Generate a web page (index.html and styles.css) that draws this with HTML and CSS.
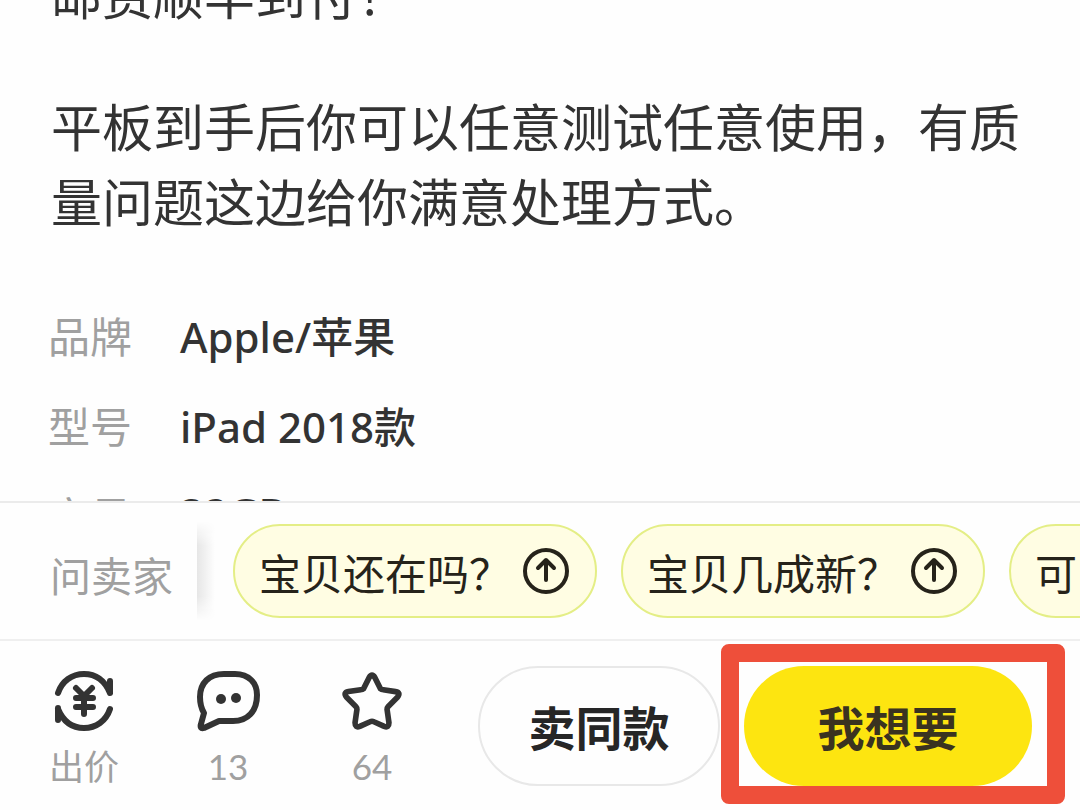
FILE: index.html
```html
<!DOCTYPE html>
<html lang="zh-CN">
<head>
    <meta charset="UTF-8">
    <meta name="viewport" content="width=device-width, initial-scale=1.0">
    <title>宝贝详情</title>
    <link rel="stylesheet" href="styles.css">
</head>
<body>
    <!-- Item details -->
    <main class="detail">
        <div class="description">
            <p>邮费顺丰到付！</p>
            <p>平板到手后你可以任意测试任意使用，有质量问题这边给你满意处理方式。</p>
        </div>
        <dl class="params">
            <dt>品牌</dt>
            <dd>Apple/苹果</dd>
            <dt>型号</dt>
            <dd>iPad 2018款</dd>
            <dt>容量</dt>
            <dd class="latin">32GB</dd>
        </dl>
    </main>

    <!-- Quick questions -->
    <section class="ask-bar">
        <h2 class="ask-title">问卖家</h2>
        <div class="ask-shadow"></div>
        <div class="ask-list">
            <button class="chip">
                <span>宝贝还在吗？</span>
                <svg class="chip-icon" viewBox="0 0 46 46">
                    <circle cx="23" cy="23" r="21" />
                    <path d="M23 32V13M15 20l8-8 8 8" />
                </svg>
            </button>
            <button class="chip">
                <span>宝贝几成新？</span>
                <svg class="chip-icon" viewBox="0 0 46 46">
                    <circle cx="23" cy="23" r="21" />
                    <path d="M23 32V13M15 20l8-8 8 8" />
                </svg>
            </button>
            <button class="chip">
                <span>可以小刀吗？</span>
                <svg class="chip-icon" viewBox="0 0 46 46">
                    <circle cx="23" cy="23" r="21" />
                    <path d="M23 32V13M15 20l8-8 8 8" />
                </svg>
            </button>
        </div>
    </section>

    <!-- Bottom actions -->
    <footer class="action-bar">
        <nav class="tools">
            <button class="tool">
                <svg class="tool-icon" viewBox="0 0 64 64">
                    <path d="M6 24C10 12 20 5 32 5c12 0 21 7 26 19M58 12v12M58 40c-4 12-14 19-26 19C20 59 11 52 6 40M6 39v12" />
                    <path d="M24 19l8 8 8-8M24 29h17M24 38h17M32 27v18" />
                </svg>
                <span>出价</span>
            </button>
            <button class="tool">
                <svg class="tool-icon" viewBox="0 0 64 64">
                    <path d="M28 5h11c14 0 22 9 22 21 0 16-9 26-24 26H23L8 59c-3 1-4-1-3-4l3-11c-3-5-4-10-4-16C4 14 13 5 28 5z" />
                    <circle class="dot" cx="25" cy="30" r="5" />
                    <circle class="dot" cx="40" cy="29" r="5" />
                </svg>
                <span>13</span>
            </button>
            <button class="tool">
                <svg class="tool-icon" viewBox="-2 -1 68 68">
                    <path d="M29 8q3-5 6 0l6 12q1 1 3 1l13 2q6 1 2 6L49 39q-1 1-1 3l2 14q0 6-5 4l-11-5q-2-1-4 0l-11 5q-5 2-5-4l2-14q0-2-1-3L5 29q-4-5 2-6l13-2q2 0 3-1z" />
                </svg>
                <span>64</span>
            </button>
        </nav>
        <button class="btn btn-sell">卖同款</button>
        <div class="want">
            <button class="btn btn-want">我想要</button>
            <div class="highlight"></div>
        </div>
    </footer>
</body>
</html>
```

FILE: styles.css
```css
* {
    box-sizing: border-box;
}

body {
    margin: 0;
    height: 100vh;
    display: flex;
    flex-direction: column;
    overflow: hidden;
    background-color: #fefefe;
    color: #333;
    font-family: "Noto Sans CJK SC", sans-serif;
}

button {
    padding: 0;
    border: none;
    background: none;
    color: inherit;
    font-family: inherit;
    cursor: pointer;
}

svg {
    display: block;
    fill: none;
    stroke: currentColor;
    stroke-linecap: round;
    stroke-linejoin: round;
}

/* Item details */
.detail {
    flex: 1;
    min-height: 0;
    padding: 0 48px;
    overflow: hidden;
}

.description {
    margin-top: -44px;
    padding-left: 3px;
    font-size: 51px;
    line-height: 75px;
}

.description p {
    margin: 0 0 57px;
}

.params {
    display: grid;
    grid-template-columns: 84px 1fr;
    column-gap: 48px;
    row-gap: 30px;
    margin: 0;
    padding-top: 12px;
    font-family: "Noto Sans", "Noto Sans CJK SC", sans-serif;
    font-size: 42px;
    line-height: 60px;
}

.params dt {
    color: #a0a0a0;
}

.params dd {
    margin: 0;
    font-weight: 500;
}

.params .latin {
    line-height: 52px;
}

/* Quick questions */
.ask-bar {
    display: flex;
    align-items: center;
    height: 138px;
    border-top: 2px solid #ebebeb;
    overflow: hidden;
}

.ask-title {
    flex: none;
    margin: 0;
    padding: 6px 24px 0 50px;
    color: #a0a0a0;
    font-size: 41px;
    font-weight: 400;
}

.ask-shadow {
    flex: none;
    width: 18px;
    height: 100px;
    background: linear-gradient(to right, #e6e6e6, #fefefe);
    mask-image: linear-gradient(transparent, #000 25%, #000 75%, transparent);
}

.ask-list {
    display: flex;
    gap: 24px;
    padding-left: 18px;
}

.chip {
    flex: none;
    display: flex;
    align-items: center;
    gap: 12px;
    height: 94px;
    padding: 0 26px 0 24px;
    border: 2px solid #e4ee86;
    border-radius: 47px;
    background-color: #fffde3;
    color: #26231a;
    font-size: 42px;
}

.chip-icon {
    width: 46px;
    height: 46px;
    stroke-width: 4;
}

/* Bottom actions */
.action-bar {
    display: flex;
    align-items: center;
    height: 171px;
    padding-right: 48px;
    border-top: 2px solid #efefef;
}

.tools {
    flex: 1;
    display: flex;
    padding: 8px 0 0 12px;
}

.tool {
    display: flex;
    flex-direction: column;
    align-items: center;
    gap: 9px;
    width: 144px;
    color: #333;
}

.tool span {
    color: #a0a0a0;
    font-family: Lato, "Noto Sans CJK SC", sans-serif;
    font-size: 35px;
    line-height: 48px;
}

.tool-icon {
    width: 64px;
    height: 64px;
    stroke-width: 6;
}

.tool-icon .dot {
    fill: currentColor;
    stroke: none;
}

.btn {
    height: 120px;
    border-radius: 60px;
    font-size: 47px;
    font-weight: 700;
}

.btn-sell {
    width: 242px;
    margin-right: 24px;
    border: 2px solid #e8e8e8;
    color: #262626;
}

.want {
    position: relative;
}

.btn-want {
    display: block;
    width: 288px;
    background-color: #fde510;
    color: #3a3320;
}

/* Marker frame around the buy button */
.highlight {
    position: absolute;
    top: -22px;
    right: -33px;
    bottom: -18px;
    left: -23px;
    border: 18px solid #ee4f3a;
    border-radius: 8px;
    pointer-events: none;
}
```
